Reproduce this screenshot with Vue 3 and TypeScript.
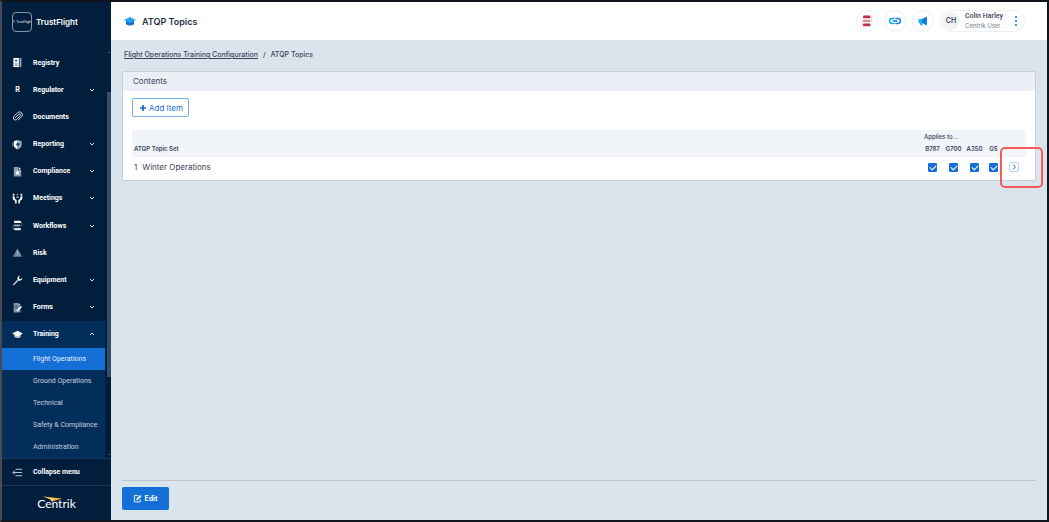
<script setup lang="ts">
import { ref } from 'vue'

interface NavItem {
  label: string
  icon: string
  expandable: boolean
}

const navItems: NavItem[] = [
  { label: 'Registry', icon: 'registry', expandable: false },
  { label: 'Regulator', icon: 'regulator', expandable: true },
  { label: 'Documents', icon: 'documents', expandable: false },
  { label: 'Reporting', icon: 'reporting', expandable: true },
  { label: 'Compliance', icon: 'compliance', expandable: true },
  { label: 'Meetings', icon: 'meetings', expandable: true },
  { label: 'Workflows', icon: 'workflows', expandable: true },
  { label: 'Risk', icon: 'risk', expandable: false },
  { label: 'Equipment', icon: 'equipment', expandable: true },
  { label: 'Forms', icon: 'forms', expandable: true },
]

const trainingItems: string[] = [
  'Flight Operations',
  'Ground Operations',
  'Technical',
  'Safety & Compliance',
  'Administration',
]
const activeItem = ref('Flight Operations')

const fleets: string[] = ['B787', 'G700', 'A350', 'GS']
const topics = ref([
  { id: 1, name: 'Winter Operations', applies: [true, true, true, true] },
])
</script>

<template>
  <div class="app">
    <aside class="sidebar">
      <div class="brand">
        <span class="brand-mark">T: TrustFlight</span>
        <span class="brand-name">TrustFlight</span>
      </div>

      <div class="nav-area">
        <nav class="nav">
          <button v-for="item in navItems" :key="item.label" type="button" class="nav-item">
            <span class="nav-icon">
              <svg v-if="item.icon === 'registry'" viewBox="0 0 12 12">
                <path d="M1.500 1h6v10h-6z" fill="#fff" />
                <path d="M8.300 1h2v10h-2z" fill="#8fa3b9" />
                <circle cx="4.500" cy="4" r="1.200" fill="#2b4b70" />
                <path d="M3 7.500h3M3 9h3" stroke="#2b4b70" stroke-width=".8" />
              </svg>
              <span v-else-if="item.icon === 'regulator'" class="letter">R</span>
              <svg v-else-if="item.icon === 'documents'" viewBox="0 0 12 12" fill="none" stroke="#e3eaf2" stroke-linecap="round">
                <path d="M3.500 7.500 7.600 3.400a1.100 1.100 0 0 1 1.600 1.600L5 9.200A2.200 2.200 0 0 1 1.900 6.100L6.200 1.900a3 3 0 0 1 4.300 4.200L6.800 9.800" />
              </svg>
              <svg v-else-if="item.icon === 'reporting'" viewBox="0 0 12 12">
                <path d="M6 1 2 2.500v4C2 8.800 4 10.500 6 11.500z" fill="#fff" />
                <path d="M6 1l4.500 1.500v4C10.500 8.800 8 10.500 6 11.500z" fill="#9aacbf" />
                <circle cx="6.500" cy="5.800" r="1.800" fill="#264668" />
                <path d="M1 4v4" stroke="#9aacbf" />
              </svg>
              <svg v-else-if="item.icon === 'compliance'" viewBox="0 0 12 12">
                <path d="M2 1h5v3h3v7.500H2z" fill="#8c9fb5" />
                <path d="M7.500 1 10 3.500H7.500z" fill="#fff" />
                <path d="m6 4.500.8 1.700 1.900.2-1.400 1.300.4 1.900L6 8.700l-1.700.9.400-1.900-1.400-1.300 1.900-.2z" fill="#fff" />
              </svg>
              <svg v-else-if="item.icon === 'meetings'" viewBox="0 0 12 12">
                <g fill="#fff">
                  <circle cx="1.800" cy="2" r="1.100" /><circle cx="10.200" cy="2" r="1.100" />
                  <path d="M.5 3.500h2l.9 3 1.700 1.200v3.800H3.400V8.700L1 7zM11.500 3.500h-2l-.9 3-1.700 1.200v3.800h1.700V8.700L11 7z" />
                </g>
                <circle cx="6" cy="1.800" r="1" fill="#7e93aa" />
                <path d="M4.300 4.700h3.400" stroke="#7e93aa" stroke-width="1.500" />
              </svg>
              <svg v-else-if="item.icon === 'workflows'" viewBox="0 0 12 12">
                <rect x="2.200" y=".8" width="7.600" height="2.600" rx="1" fill="#fff" />
                <rect x="2" y="5" width="7" height="2" rx=".8" fill="#8fa3b9" />
                <rect x="2.200" y="8.800" width="7.600" height="2.400" rx="1" fill="#dfe6ee" />
                <path d="M9.500 2.200h1.200v3.900H9M2.500 6H1v4h1.500" fill="none" stroke="#6d849e" stroke-width=".7" />
              </svg>
              <svg v-else-if="item.icon === 'risk'" viewBox="0 0 12 12">
                <path d="M6 1.500 11 10.500H1z" fill="#7187a0" />
                <path d="M6 4.500v3M6 8.500v1" stroke="#b9c6d4" stroke-width=".8" />
              </svg>
              <svg v-else-if="item.icon === 'equipment'" viewBox="0 0 12 12">
                <path d="M1.800 10.300 7 5.200" stroke="#c1ccd8" stroke-width="1.700" stroke-linecap="round" />
                <path d="M8.900.8A2.800 2.800 0 0 0 6 4.500l1.600 1.600A2.800 2.800 0 0 0 11.200 3L9.500 4.500 7.800 4.200l-.3-1.700z" fill="#fff" />
              </svg>
              <svg v-else viewBox="0 0 12 12">
                <path d="M1.800 1h5v2.500h2.400v8H1.800z" fill="#8195ac" />
                <path d="M7 1l2.400 2.400H7z" fill="#dfe6ee" />
                <path d="M3 4.500h3M3 6.500h3" stroke="#17375b" stroke-width=".8" />
                <path d="M5.500 9.700 10.400 5" stroke="#fff" stroke-width="1.600" />
              </svg>
            </span>
            <span class="nav-label">{{ item.label }}</span>
            <svg v-if="item.expandable" class="chevron" viewBox="0 0 6 6"><path d="m1 2 2 2 2-2" /></svg>
          </button>

          <div class="nav-group">
            <button type="button" class="nav-item" aria-expanded="true">
              <span class="nav-icon">
                <svg viewBox="0 0 12 12">
                  <path d="M2.500 5.500h7v3.300q-3.500 2-7 0z" fill="#b6c3d1" />
                  <path d="M6 1.800 11.800 5 6 8.200.2 5z" fill="#fff" />
                </svg>
              </span>
              <span class="nav-label">Training</span>
              <svg class="chevron" viewBox="0 0 6 6"><path d="m1 4 2-2 2 2" /></svg>
            </button>
            <a
              v-for="label in trainingItems"
              :key="label"
              href="#"
              class="sub-item"
              :class="{ active: label === activeItem }"
              @click.prevent="activeItem = label"
            >{{ label }}</a>
          </div>
        </nav>
        <div class="scrollbar">
          <svg viewBox="0 0 4 4"><path d="m1 3 1-1 1 1z" /></svg>
          <div class="track-top"></div>
          <div class="thumb"></div>
          <div class="track-bottom"></div>
          <svg viewBox="0 0 4 4"><path d="m1 1 1 1 1-1z" /></svg>
        </div>
      </div>

      <button type="button" class="collapse">
        <span class="nav-icon">
          <svg viewBox="0 0 12 12" fill="none" stroke="#c9d4e0">
            <path d="M4 2.500h7M1 6h10M4 9.500h7M3 4 1 6l2 2" />
          </svg>
        </span>
        <span class="nav-label">Collapse menu</span>
      </button>

      <div class="product">
        <span class="product-name">Centrik</span>
        <svg class="product-swoosh" viewBox="0 0 20 6">
          <path d="M0 .5 19 2.500 9 5.500 7 3z" fill="#f5b335" />
          <path d="M0 .5 7 3l2 2.500L11 3z" fill="#ffdb85" />
        </svg>
      </div>
    </aside>

    <div class="main">
      <header class="topbar">
        <svg class="title-icon" viewBox="0 0 14 12">
          <path d="M3 5h8v4.300q-4 2.400-8 0z" fill="#1672d2" />
          <path d="M7 2 13 5 7 8 1 5z" fill="#2ba0f2" />
        </svg>
        <h1>ATQP Topics</h1>
        <div class="tools">
          <button type="button" class="round" aria-label="Workflows">
            <svg viewBox="0 0 12 12">
              <rect x="2" y=".5" width="7.500" height="2.800" rx="1" fill="#b8304a" />
              <rect x="2" y="4.700" width="7.500" height="2.300" rx="1" fill="#df8795" />
              <rect x="2" y="8.500" width="7.500" height="2.800" rx="1" fill="#b8304a" />
              <path d="M9.500 2h1.300v4H9M2 6H1v4h1" fill="none" stroke="#e5a9b3" stroke-width=".7" />
            </svg>
          </button>
          <button type="button" class="round" aria-label="Links">
            <svg viewBox="0 0 12 12" fill="none" stroke-width="1.500" stroke-linecap="round">
              <path d="M5 3.500H3a2.500 2.500 0 0 0 0 5h2M4 6h2" stroke="#10a5e8" />
              <path d="M7 3.500h2a2.500 2.500 0 0 1 0 5H7M6 6h2" stroke="#1480dc" />
            </svg>
          </button>
          <button type="button" class="round" aria-label="Announcements">
            <svg viewBox="0 0 12 12">
              <path d="M1.500 4H5v4H1.500zM2.500 8H5l.8 2.500H3.600z" fill="#17b9ed" />
              <path d="M4.800 4 10 1.500v9L4.800 8z" fill="#127fdc" />
            </svg>
          </button>
          <button type="button" class="user">
            <span class="avatar">CH</span>
            <span class="user-text">
              <span class="user-name">Colin Harley</span>
              <span class="user-role">Centrik User</span>
            </span>
            <svg class="dots" viewBox="0 0 4 12" fill="#1470d6">
              <circle cx="2" cy="2" r="1" /><circle cx="2" cy="6" r="1" /><circle cx="2" cy="10" r="1" />
            </svg>
          </button>
        </div>
      </header>

      <main class="content">
        <nav class="crumbs" aria-label="Breadcrumb">
          <a href="#">Flight Operations Training Configuration</a>
          <span>/</span>
          <span>ATQP Topics</span>
        </nav>

        <section class="panel">
          <h2>Contents</h2>
          <div class="panel-body">
            <button type="button" class="add">
              <svg viewBox="0 0 8 8"><path d="M4 1v6M1 4h6" stroke="#1265c4" stroke-width="1.700" /></svg>
              Add Item
            </button>
            <table>
              <colgroup>
                <col />
                <col class="fleet" /><col class="fleet" /><col class="fleet" /><col class="fleet-last" />
                <col class="action" />
              </colgroup>
              <thead>
                <tr class="group-row">
                  <th></th>
                  <th colspan="4" scope="colgroup" class="applies">Applies to...</th>
                  <th></th>
                </tr>
                <tr class="label-row">
                  <th scope="col" class="topic-head">ATQP Topic Set</th>
                  <th v-for="fleet in fleets" :key="fleet" scope="col">{{ fleet }}</th>
                  <th></th>
                </tr>
              </thead>
              <tbody>
                <tr v-for="topic in topics" :key="topic.id">
                  <td class="topic"><span class="num">{{ topic.id }}</span>{{ topic.name }}</td>
                  <td v-for="(fleet, i) in fleets" :key="fleet">
                    <input v-model="topic.applies[i]" type="checkbox" :aria-label="`${topic.name} applies to ${fleet}`" />
                  </td>
                  <td>
                    <span class="open-wrap">
                      <button type="button" class="open" aria-label="Open topic set">
                        <svg viewBox="0 0 8 8"><path d="m3 1.500 2.500 2.500L3 6.500" fill="none" stroke="#1470d6" /></svg>
                      </button>
                      <span class="highlight"></span>
                    </span>
                  </td>
                </tr>
              </tbody>
            </table>
          </div>
        </section>

        <footer class="actions">
          <button type="button" class="edit">
            <svg viewBox="0 0 10 10" fill="none" stroke="#fff">
              <path d="M6 1.800H1.500v7h6.500V6" />
              <path d="M4 6.500 8.700 1.800" stroke-width="1.800" />
            </svg>
            Edit
          </button>
        </footer>
      </main>
    </div>
  </div>
</template>

<style>
body {
  margin: 0;
}
</style>

<style scoped>
* {
  box-sizing: border-box;
}
.app {
  display: flex;
  min-height: 100vh;
  border: 2px solid #10141c;
  border-left-color: #454c55;
  background: #dae4ed;
  color: #3a4558;
  font-family: Inter, "Liberation Sans", sans-serif;
  font-size: 7px;
}
button {
  padding: 0;
  border: 0;
  background: none;
  color: inherit;
  font: inherit;
  cursor: pointer;
}
svg {
  display: block;
  flex: none;
}
.sidebar {
  display: flex;
  flex: none;
  flex-direction: column;
  width: 109px;
  background: #011e3c;
  color: #fff;
}
.brand {
  display: flex;
  align-items: center;
  gap: 4px;
  height: 47px;
  padding: 0 0 7px 10px;
}
.brand-mark {
  display: flex;
  align-items: center;
  justify-content: center;
  width: 20px;
  height: 20px;
  overflow: hidden;
  border: 1px solid #8495a8;
  border-radius: 4px;
  font-size: 3px;
  white-space: nowrap;
}
.brand-name {
  font-size: 8px;
  font-weight: 600;
}
.nav-area {
  display: flex;
  flex: 1;
}
.nav {
  display: flex;
  flex: 1;
  flex-direction: column;
  justify-content: space-between;
}
.nav-item,
.collapse {
  display: flex;
  align-items: center;
  width: 100%;
  height: 27px;
  padding: 0 10px 0 9px;
  text-align: left;
}
.nav-icon {
  display: flex;
  justify-content: center;
  width: 13px;
  margin-right: 9px;
}
.nav-icon svg {
  width: 11px;
  height: 11px;
}
.letter {
  font-weight: 700;
}
.nav-label {
  flex: 1;
  font-family: Roboto, Inter, sans-serif;
  font-weight: 700;
  white-space: nowrap;
}
.chevron {
  width: 6px;
  height: 6px;
  fill: none;
  stroke: #dce4ed;
  stroke-width: 1;
}
.nav-group {
  background: #032d5b;
}
.sub-item {
  display: flex;
  align-items: center;
  height: 22px;
  padding-left: 31px;
  color: #c4d0dd;
  font-family: Roboto, Inter, sans-serif;
  text-decoration: none;
  white-space: nowrap;
}
.sub-item.active {
  background: #1470d6;
  color: #e3effc;
}
.scrollbar {
  display: flex;
  flex-direction: column;
  align-items: center;
  width: 6px;
  padding: 1px 0 1px 1px;
}
.scrollbar svg {
  width: 4px;
  height: 4px;
  fill: #7e90a4;
}
.track-top {
  flex: 38;
}
.thumb {
  flex: 285;
  width: 4px;
  background: #344d6b;
}
.track-bottom {
  flex: 76;
}
.collapse {
  height: 27px;
  border-top: 1px solid #1d3857;
}
.product {
  position: relative;
  height: 35px;
  border-top: 1px solid #1d3857;
  text-align: center;
}
.product-name {
  font-family: Lato, "Open Sans", sans-serif;
  font-size: 12px;
  line-height: 36px;
}
.product-swoosh {
  position: absolute;
  top: 10px;
  left: 41px;
  width: 20px;
  height: 6px;
}
.main {
  display: flex;
  flex: 1;
  flex-direction: column;
  min-width: 0;
}
.topbar {
  display: flex;
  align-items: center;
  height: 38px;
  padding: 0 22px 0 12px;
  background: #fff;
}
.title-icon {
  width: 14px;
  height: 12px;
  margin-right: 5px;
}
h1 {
  margin: 0;
  color: #283345;
  font-size: 9px;
  font-weight: 600;
}
.tools {
  display: flex;
  align-items: center;
  gap: 6px;
  margin-left: auto;
}
.round {
  display: flex;
  align-items: center;
  justify-content: center;
  width: 22px;
  height: 22px;
  border: 1px solid #edeff3;
  border-radius: 50%;
}
.round svg {
  width: 12px;
  height: 12px;
}
.user {
  display: flex;
  align-items: center;
  height: 22px;
  padding: 0 6px 0 1px;
  border: 1px solid #edeff3;
  border-radius: 11px;
  text-align: left;
}
.avatar {
  width: 18px;
  margin-right: 5px;
  border-radius: 50%;
  background: #f1f2f4;
  font-weight: 600;
  line-height: 18px;
  text-align: center;
}
.user-text {
  display: flex;
  flex-direction: column;
  width: 49px;
  line-height: 9px;
  white-space: nowrap;
}
.user-name {
  font-family: Roboto, Inter, sans-serif;
  font-weight: 500;
}
.user-role {
  color: #737c8a;
  font-size: 6px;
}
.dots {
  width: 4px;
  height: 12px;
}
.content {
  display: flex;
  flex: 1;
  flex-direction: column;
  padding: 10px 11px;
}
.crumbs {
  display: flex;
  gap: 5px;
  margin-bottom: 11px;
  padding-left: 2px;
  font-weight: 500;
  line-height: 10px;
}
.crumbs a {
  color: inherit;
}
.panel {
  border: 1px solid #c6cfdb;
  border-radius: 2px;
  background: #fff;
}
h2 {
  margin: 0;
  padding-left: 10px;
  background: #ebf0f7;
  font-size: 8px;
  font-weight: 400;
  line-height: 19px;
}
.panel-body {
  padding: 7px 9px 3px;
}
.add {
  display: flex;
  align-items: center;
  gap: 2px;
  height: 19px;
  margin-bottom: 13px;
  padding: 0 5px 0 6px;
  border: 1px solid #77aeea;
  border-radius: 2px;
  color: #1470d6;
  font-size: 8px;
}
.add svg {
  width: 8px;
  height: 8px;
}
table {
  width: 100%;
  border-spacing: 0;
  table-layout: fixed;
}
.fleet {
  width: 21px;
}
.fleet-last {
  width: 17px;
}
.action {
  width: 24px;
}
th {
  padding: 0;
  background: #f1f4f9;
  font-size: 6px;
  font-weight: 600;
  line-height: 8px;
  white-space: nowrap;
}
.group-row {
  height: 14px;
}
.label-row {
  height: 13px;
}
.label-row th {
  padding-bottom: 4px;
  vertical-align: bottom;
}
.applies {
  padding-left: 2px;
  font-weight: 500;
  text-align: left;
}
.topic-head {
  padding-left: 2px;
  text-align: left;
}
td {
  height: 20px;
  padding: 0;
  text-align: center;
}
.topic {
  padding-left: 2px;
  font-size: 8px;
  text-align: left;
}
.num {
  margin-right: 5px;
}
input {
  display: flex;
  align-items: center;
  justify-content: center;
  width: 9px;
  height: 9px;
  margin: 0 auto;
  border: 1px solid #1470d6;
  border-radius: 1px;
  appearance: none;
  background: #fff;
}
input:checked {
  background: #1470d6;
}
input:checked::after {
  width: 5px;
  height: 3px;
  border: solid #fff;
  border-width: 0 0 1px 1px;
  content: "";
  transform: rotate(-45deg);
}
.open-wrap {
  position: relative;
  display: flex;
  justify-content: center;
}
.open {
  display: flex;
  align-items: center;
  justify-content: center;
  width: 10px;
  height: 10px;
  border: 1px solid #b7d3f2;
  border-radius: 2px;
}
.open svg {
  width: 8px;
  height: 8px;
}
.highlight {
  position: absolute;
  top: -15px;
  left: -2px;
  width: 43px;
  height: 41px;
  border: 2px solid #f55a5a;
  border-radius: 5px;
  pointer-events: none;
}
.actions {
  margin-top: auto;
  padding-top: 6px;
  border-top: 1px solid #bcc6d2;
}
.edit {
  display: flex;
  align-items: center;
  justify-content: center;
  gap: 2px;
  width: 47px;
  height: 23px;
  border-radius: 2px;
  background: #1470d6;
  color: #fff;
  font-weight: 700;
}
.edit svg {
  width: 9px;
  height: 9px;
}
</style>
